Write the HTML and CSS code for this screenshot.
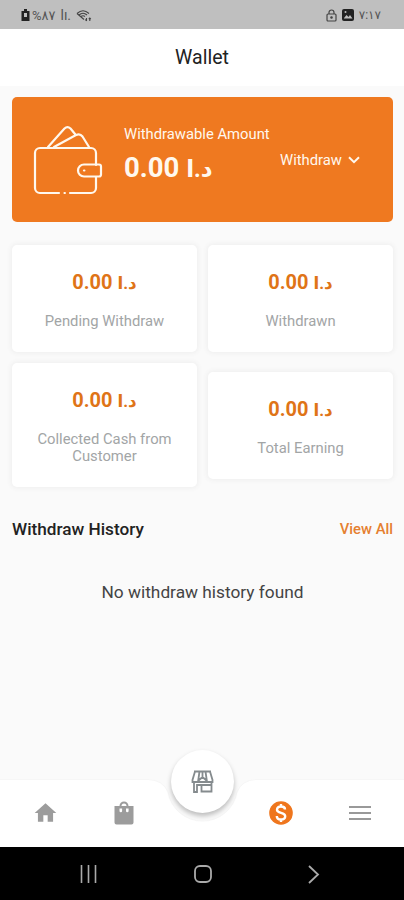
FILE: index.html
```html
<!DOCTYPE html>
<html lang="en">
<head>
<meta charset="UTF-8">
<meta name="viewport" content="width=device-width, initial-scale=1.0">
<title>Wallet</title>
<link rel="stylesheet" href="styles.css">
</head>
<body>

<div class="phone">
    <div class="status-bar">
        <div class="status-group">
            <svg width="9" height="12" viewBox="0 0 9 12"><path d="M3 0h3v2h2.500v10h-8V2H3z" fill="#222"/><path d="M3 4h3v4H3z" fill="#bfbfbf"/></svg>
            <span class="battery">%٨٧</span>
            <span class="signal">lı.</span>
            <svg width="16" height="13" viewBox="0 0 16 13" fill="none" stroke="#444" stroke-width="1.100"><path d="M1 4.500Q7 -1 13 4.500M3 6Q7 2.500 11 6M1 4.500L8 10.500M5 7.500Q7 6 9 7.500"/><path d="M10.500 12V9M9.300 10.500L10.500 12M13.800 9V12M12.800 10.200L13.800 9L14.800 10.200"/></svg>
        </div>
        <div class="status-group">
            <svg width="11" height="13" viewBox="0 0 11 13" fill="none" stroke="#444" stroke-width="1.200"><rect x="1" y="5" width="9" height="7" rx="1"/><path d="M3 5V3.500a2.500 2.500 0 0 1 5 0V5"/><circle cx="5.500" cy="8.500" r=".7" fill="#222"/></svg>
            <svg width="12" height="12" viewBox="0 0 12 12"><rect width="12" height="12" rx="2" fill="#222"/><path d="M2 9l2.500-3 2 2 1.500-2L10.500 9.500H2z" fill="#bfbfbf"/><circle cx="3.500" cy="3" r="1" fill="#bfbfbf"/></svg>
            <span class="time">٧:١٧</span>
        </div>
    </div>

    <header class="header">Wallet</header>

    <main class="content">
        <section class="balance">
            <svg class="wallet-icon" width="70" height="72" viewBox="0 0 70 72" fill="none" stroke="#fff8ee" stroke-width="2.200" stroke-linecap="round" stroke-linejoin="round">
                <path d="M26 70H7a5 5 0 0 1-5-5V30a5 5 0 0 1 5-5h51a5 5 0 0 1 5 5v12M37 70H58a5 5 0 0 0 5-5V54M31.500 70h.4"/>
                <path d="M15 24L31.500 5.500q3-3 6 0L42 11M21 24L43 12q4-2 6.500 1.500L56 24"/>
                <path d="M51 41.500h15q2 0 2 2v8q0 2-2 2H51a6 6 0 0 1 0-12zM51 47.500h.4"/>
            </svg>
            <div class="balance-info">
                <div class="balance-label">Withdrawable Amount</div>
                <div class="balance-amount">0.00 <span class="currency">د.ا</span></div>
            </div>
            <button class="withdraw-btn">
                Withdraw
                <svg width="12" height="8" viewBox="0 0 12 8" fill="none" stroke="#fff8ee" stroke-width="2"><path d="M1 1.200l5 5 5-5"/></svg>
            </button>
        </section>

        <section class="stats">
            <div class="stat">
                <div class="amount">0.00 <span class="currency">د.ا</span></div>
                <div class="stat-label">Pending Withdraw</div>
            </div>
            <div class="stat">
                <div class="amount">0.00 <span class="currency">د.ا</span></div>
                <div class="stat-label">Withdrawn</div>
            </div>
            <div class="stat">
                <div class="amount">0.00 <span class="currency">د.ا</span></div>
                <div class="stat-label">Collected Cash from Customer</div>
            </div>
            <div class="stat">
                <div class="amount">0.00 <span class="currency">د.ا</span></div>
                <div class="stat-label">Total Earning</div>
            </div>
        </section>

        <div class="history-head">
            <h2>Withdraw History</h2>
            <a href="#">View All</a>
        </div>
        <p class="empty">No withdraw history found</p>
    </main>

    <nav class="bottom-nav">
        <!-- bar with the dip around the shop button -->
        <svg class="nav-bg" width="404" height="68" viewBox="0 0 404 68"><path d="M-2 .5H148Q163 1 168 13A35 35 0 0 0 237 13Q242 1 256 .5H406V70H-2z" fill="#fff" stroke="#f6f6f6"/></svg>
        <a href="#" class="nav-item"><svg width="27" height="26" viewBox="0 0 24 24" fill="#9c9c9c"><path d="M10 20v-6h4v6h5v-8h3L12 3 2 12h3v8z"/></svg></a>
        <a href="#" class="nav-item"><svg width="24" height="26" viewBox="0 0 24 26" fill="#9c9c9c"><path fill-rule="evenodd" d="M2.500 6H7.500a4.500 4.500 0 0 1 9 0H21.500v16.500a2 2 0 0 1-2 2H4.500a2 2 0 0 1-2-2zM9.500 6h5a2.500 2.500 0 0 0-5 0zM7.500 8.500v2.500a1.300 1.300 0 0 0 2.600 0V8.500zM14 8.500v2.500a1.300 1.300 0 0 0 2.600 0V8.500z"/></svg></a>
        <a href="#" class="nav-item shop">
            <svg width="23" height="23" viewBox="0 0 23 23" fill="none" stroke="#858b8e" stroke-width="1.800"><path d="M3 1.500H20M4 1.500L1.500 10v2H21.500v-2L19 1.500M8.500 1.500L7 12M11.500 1.500V7M14.500 1.500L16 12M7 11L11.500 7L16 11M3 12V22H6V15H20.500V12M10.500 15V21.500H20.500V15"/></svg>
        </a>
        <a href="#" class="nav-item"><svg width="24" height="24" viewBox="0 0 24 24"><circle cx="12" cy="12" r="11.800" fill="#ef761d"/><path d="M16 8.500C16 6.500 14.300 5.500 12 5.500S8 6.500 8 8.700c0 4.200 8.200 2.200 8.200 6.600 0 2-1.900 3.200-4.200 3.200S7.800 17.300 7.800 15M12 3v3M12 18v3" fill="none" stroke="#fff" stroke-width="2.400"/></svg></a>
        <a href="#" class="nav-item"><svg width="22" height="16" viewBox="0 0 22 16" stroke="#999" stroke-width="2"><path d="M0 2h22M0 8h22M0 14h22"/></svg></a>
    </nav>

    <div class="system-bar">
        <svg width="18" height="18" viewBox="0 0 18 18" stroke="#aaa" stroke-width="1.600"><path d="M1.500 0v18M8.500 0v18M15.500 0v18"/></svg>
        <svg width="18" height="18" viewBox="0 0 18 18" fill="none" stroke="#aaa" stroke-width="1.800"><rect x="1" y="1" width="16" height="16" rx="5"/></svg>
        <svg width="14" height="19" viewBox="0 0 14 19" fill="none" stroke="#aaa" stroke-width="1.800"><path d="M2 1l9 8.500-9 8.500"/></svg>
    </div>
</div>

</body>
</html>
```

FILE: styles.css
```css
* {
    box-sizing: border-box;
}
body {
    margin: 0;
    font-family: Roboto, "Noto Sans", "DejaVu Sans", sans-serif;
    color: #222;
}
svg {
    display: block;
    flex-shrink: 0;
}
a {
    text-decoration: none;
}
.phone {
    width: 404px;
    height: 900px;
    display: flex;
    flex-direction: column;
    background: #fafafa;
    overflow: hidden;
}
.status-bar {
    height: 29px;
    padding: 1px 23px 0 21px;
    background: #bfbfbf;
    display: flex;
    justify-content: space-between;
    align-items: center;
    color: #555;
    font-size: 12px;
}
.status-group {
    display: flex;
    align-items: center;
    gap: 5px;
}
.battery {
    margin-left: -3px;
    font-size: 13px;
}
.signal {
    font-size: 14px;
}
.header {
    height: 57px;
    background: #fff;
    font-size: 19.5px;
    line-height: 58px;
    text-align: center;
}
.content {
    flex: 1;
    padding: 11px 11px 0 12px;
}
.balance {
    height: 125px;
    padding-left: 21px;
    display: flex;
    align-items: flex-start;
    background: #ef7920;
    border-radius: 5px;
    color: #fff8ee;
}
.wallet-icon {
    margin-top: 26px;
}
.balance-info {
    width: 156px;
    margin: 28px 0 0 21px;
    white-space: nowrap;
}
.balance-label {
    font-size: 14.8px;
    line-height: 18px;
}
.balance-amount {
    margin-top: 8px;
    font-size: 27.5px;
    line-height: 34px;
    font-weight: 700;
}
.currency {
    font-size: 0.84em;
}
.withdraw-btn {
    display: flex;
    align-items: center;
    gap: 6px;
    margin-top: 54px;
    padding: 0;
    border: 0;
    background: none;
    font: 14.8px/18px Roboto, sans-serif;
    color: #fff8ee;
}
.stats {
    display: grid;
    grid-template-columns: 1fr 1fr;
    gap: 11px;
    align-items: center;
    margin-top: 23px;
}
.stat {
    padding: 25px 20px 22px;
    background: #fff;
    border-radius: 5px;
    box-shadow: 0 0 5px 1px #eee;
    text-align: center;
}
.amount {
    font-size: 20px;
    line-height: 24px;
    height: 24px;
    font-weight: 700;
    color: #df7417;
}
.stat-label {
    margin-top: 19px;
    font-size: 14.8px;
    line-height: 17px;
    color: #a2a5a6;
}
.history-head {
    display: flex;
    justify-content: space-between;
    align-items: center;
    margin-top: 30px;
    height: 24px;
}
.history-head h2 {
    margin: 0;
    font-size: 17.2px;
    font-weight: 500;
}
.history-head a {
    font-size: 14.8px;
    font-weight: 500;
    color: #e58030;
}
.empty {
    margin: 40px 0 0;
    font-size: 17.3px;
    line-height: 22px;
    text-align: center;
    color: #444;
}
.bottom-nav {
    position: relative;
    height: 67px;
    padding: 1px 5px 0 6px;
    display: grid;
    grid-template-columns: repeat(5, 1fr);
}
.nav-bg {
    position: absolute;
    left: 0;
    top: 0;
}
.nav-item {
    position: relative;
    display: flex;
    align-items: center;
    justify-content: center;
}
.shop {
    width: 63px;
    height: 63px;
    margin-top: -30px;
    justify-self: center;
    background: #fff;
    border-radius: 50%;
    box-shadow: 0 3px 5px rgba(0, 0, 0, 0.25);
}
.system-bar {
    height: 54px;
    padding: 1px 83px 0 80px;
    background: #000;
    border-top: 1px solid #777;
    display: flex;
    align-items: center;
    justify-content: space-between;
}
```
